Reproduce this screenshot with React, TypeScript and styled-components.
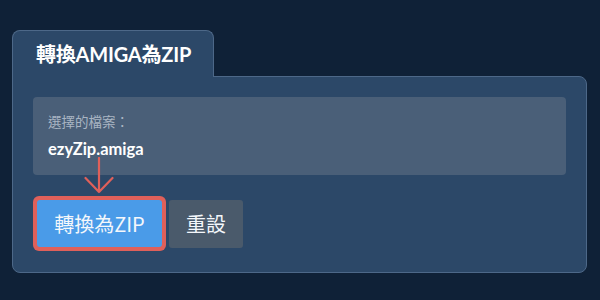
import React from 'react';
import styled, { createGlobalStyle } from 'styled-components';

const GlobalStyle = createGlobalStyle`
  html, body {
    margin: 0;
    padding: 0;
    background: #0f2137;
  }
  body {
    font-family: Lato, "Noto Sans CJK TC", "Noto Sans", sans-serif;
  }
`;

const Page = styled.div`
  width: 600px;
  height: 300px;
  box-sizing: border-box;
  padding: 30px 13px 0 12px;
`;

const Tab = styled.div`
  position: relative;
  z-index: 1;
  display: flex;
  align-items: center;
  box-sizing: border-box;
  width: 202px;
  height: 47px;
  margin-bottom: -1px;
  padding: 0 0 2px 23px;
  background: #2c4868;
  border: 1px solid #4d6888;
  border-bottom: none;
  border-radius: 8px 8px 0 0;
  color: #ffffff;
  font-size: 20px;
  font-weight: 700;
  letter-spacing: -0.2px;
`;

const Panel = styled.div`
  box-sizing: border-box;
  height: 197px;
  padding: 20px;
  background: #2c4868;
  border: 1px solid #4d6888;
  border-radius: 0 8px 8px 8px;
`;

const FileBox = styled.div`
  box-sizing: border-box;
  height: 78px;
  padding: 16px 15px 0;
  background: #4a5f78;
  border-radius: 4px;
`;

const Label = styled.div`
  color: #a9b5c3;
  font-size: 13.5px;
  line-height: 18px;
`;

const FileName = styled.div`
  margin-top: 8px;
  color: #ffffff;
  font-size: 16.5px;
  font-weight: 700;
  line-height: 20px;
`;

const Actions = styled.div`
  position: relative;
  display: flex;
  align-items: center;
  gap: 3px;
  margin-top: 21px;
`;

const Highlight = styled.div`
  padding: 4px;
  background: #e0605a;
  border-radius: 6px;
  display: flex;
`;

const Button = styled.button<{ $variant: 'primary' | 'secondary' }>`
  width: ${p => (p.$variant === 'primary' ? '125px' : '74px')};
  height: ${p => (p.$variant === 'primary' ? '47px' : '48px')};
  padding: 0;
  border: none;
  border-radius: 3px;
  background: ${p => (p.$variant === 'primary' ? '#4a9be8' : '#4a5a6b')};
  color: #f4f7fb;
  font-family: "Noto Sans CJK TC", "Noto Sans", sans-serif;
  font-size: 20px;
  font-weight: 400;
  cursor: pointer;
`;

const Arrow = styled.svg`
  position: absolute;
  left: 51px;
  top: -39px;
`;

export default function App() {
  return (
    <>
      <GlobalStyle />
      <Page>
        <Tab>轉換AMIGA為ZIP</Tab>
        <Panel>
          <FileBox>
            <Label>選擇的檔案：</Label>
            <FileName>ezyZip.amiga</FileName>
          </FileBox>
          <Actions>
            <Highlight>
              <Button $variant="primary">轉換為ZIP</Button>
            </Highlight>
            <Button $variant="secondary">重設</Button>
            <Arrow width="30" height="38" viewBox="0 0 30 38">
              <path
                d="M15 1 V35 M1.5 21 L15 35 L28.5 21"
                fill="none"
                stroke="#e0605a"
                strokeWidth="2.2"
                strokeLinecap="round"
                strokeLinejoin="round"
              />
            </Arrow>
          </Actions>
        </Panel>
      </Page>
    </>
  );
}
